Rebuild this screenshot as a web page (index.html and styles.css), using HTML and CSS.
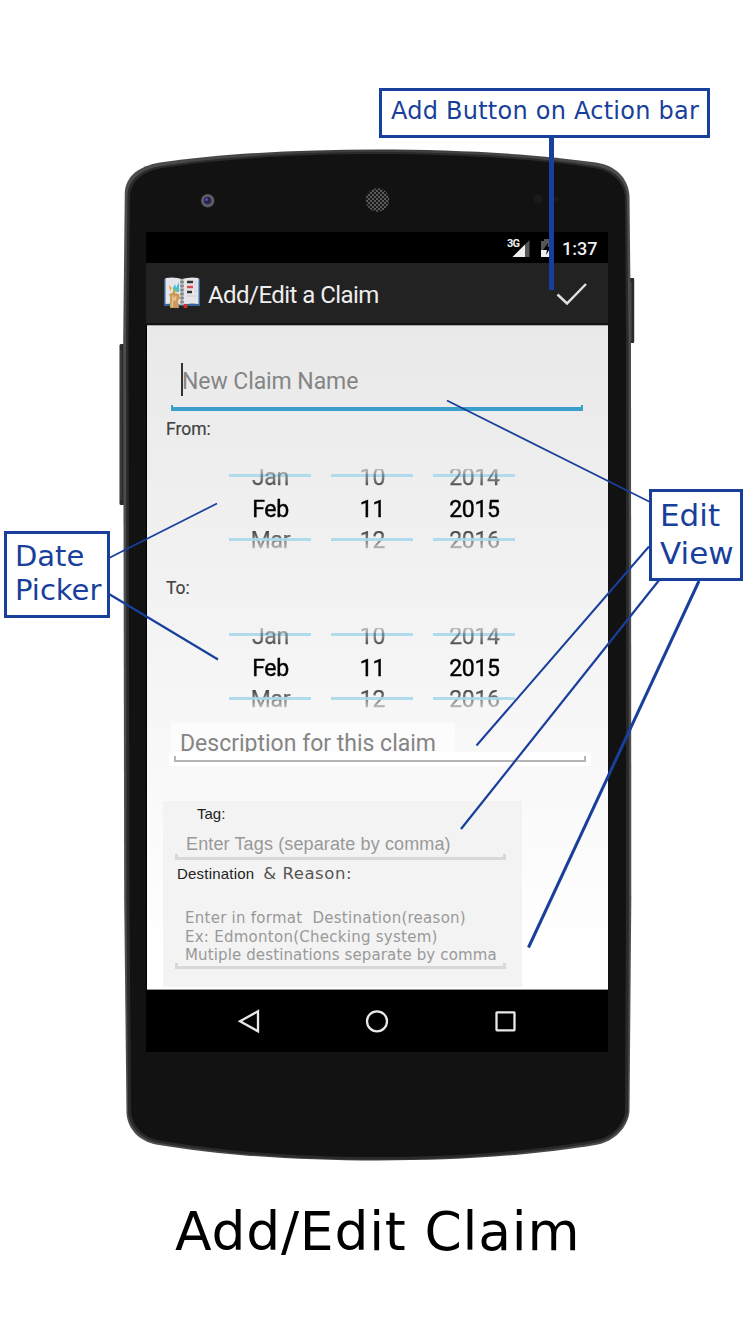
FILE: index.html
```html
<!DOCTYPE html>
<html lang="en">
<head>
<meta charset="utf-8">
<title>Add/Edit Claim</title>
<link rel="stylesheet" href="styles.css">
</head>
<body>
<main class="board">
  <section class="device">
    <svg class="shell" viewBox="0 0 756 1323" aria-hidden="true">
      <defs>
        <linearGradient id="rim" x1="0" x2="1"><stop offset="0" stop-color="#4c4d4f"/><stop offset=".5" stop-color="#3c3c3c"/><stop offset="1" stop-color="#4c4d4f"/></linearGradient>
        <radialGradient id="lens"><stop offset="0" stop-color="#3a3a80"/><stop offset=".5" stop-color="#3c3c58"/><stop offset=".75" stop-color="#66676c"/><stop offset="1" stop-color="#4a4a4c"/></radialGradient>
        <pattern id="mesh" width="4" height="4" patternUnits="userSpaceOnUse"><rect width="4" height="4" fill="#5c5c5c"/><circle cx="1" cy="1" r="1.150" fill="#161616"/><circle cx="3" cy="3" r="1.150" fill="#161616"/></pattern>
      </defs>
      <rect x="119.500" y="344" width="6" height="161" rx="1.500" fill="#2b2b2b"/>
      <rect x="120.500" y="350" width="1" height="150" fill="#4a4a4a"/>
      <rect x="628" y="278" width="6.200" height="65" rx="1" fill="#2a2a2b"/>
      <rect x="630.500" y="282" width="1" height="58" fill="#4a4a4a"/>
      <path fill="url(#rim)" d="M123.200 340 L124.800 192 C126 176 139 166 160 162.500 C222 153.500 300 149.500 377 149.500 C454 149.500 533 153.500 596 162.500 C615 165.500 628 177 629.500 196 L631 340 L631.300 900 L629.500 1111 C628 1128 614 1141 598 1144.500 C538 1155 458 1160.500 377 1160.500 C297 1160.500 217 1155 156 1144.500 C139 1141 127.500 1129 126.500 1113 L124.200 900 Z"/>
      <path fill="#2a2a2b" d="M126 340 L127.500 194 C129 179 141 169.500 161 166 C222 156.500 300 152 377 152 C454 152 533 156.500 595 166 C613 169 626 180 627 197 L628.600 340 L629 900 L628 1111 C626 1126 613 1139 597 1142.500 C538 1153 458 1159.500 377 1159.500 C297 1159.500 217 1153.500 157 1142.500 C141 1139 129 1127 128 1112 L126.500 900 Z"/>
      <path fill="#121212" d="M128.500 340 L130 196 C131 181 143 171.500 162 168 C222 158.500 300 154 377 154 C454 154 533 158.500 594 168 C612 171 624 182 625 198 L626 340 L626 900 L625 1111 C624 1125 611 1137 596 1140 C538 1150.500 458 1157 377 1157 C297 1157 217 1151 158 1140 C143 1137 132 1126 131 1111 L129.500 900 Z"/>
      <circle cx="207.700" cy="200.700" r="6.800" fill="url(#lens)"/>
      <circle cx="207.300" cy="200.200" r="3.300" fill="#20204c"/><circle cx="206.500" cy="199.500" r="1.500" fill="#5555b4"/>
      <circle cx="377.500" cy="200" r="11.700" fill="url(#mesh)"/>
      <circle cx="538" cy="199" r="4.500" fill="#1a1a1b"/><circle cx="556" cy="199" r="2.500" fill="#1a1a1b"/>
    </svg>
    <div class="screen">
      <header class="status">
        <svg class="signal" width="26" height="20" viewBox="0 0 26 20"><path d="M22.500 1v17H5.500z" fill="#555"/><path d="M18 5.500v12.500H5.500z" fill="#eee"/></svg>
        <span class="net">3G</span>
        <svg class="battery" width="13" height="19" viewBox="0 0 13 19"><path d="M0 2h3V0h6v2h3v9H0z" fill="#555"/><path d="M0 11h12v7H0z" fill="#eee"/><path d="M7 4L2 11h4l-1 5 5-8H6.500z" fill="#000"/></svg>
        <time class="clock">1:37</time>
      </header>
      <div class="actionbar">
        <svg class="logo" width="38" height="34" viewBox="0 0 38 34">
          <path d="M1 3h36v27H1z" fill="#35659b"/><path d="M2.500 2q9-1.500 16.500 1 8-2.500 16.500-1v26q-9-1.500-16.500 1-8-2.500-16.500-1z" fill="#e6e6ea"/>
          <path d="M19 3v26" stroke="#aaa" stroke-width="3"/><path d="M17 6h4M17 10h4M17 14h4M17 18h4M17 22h4M17 26h4" stroke="#666"/>
          <path d="M10 12l2-4 1 4 3-6v10h-6z" fill="#42b9dd"/><path d="M6 9l3 3-2 3z" fill="#f0a22b"/><path d="M10 13h4v3h-4z" fill="#8ac16b"/>
          <path d="M7 32V21l-1-3 3-1 2-3 1 3 4 1 1 4-2 3 1 7H8z" fill="#c99a5b"/><path d="M9 31l1-10 2 3 1-4" stroke="#e8c58c" fill="none" stroke-width="1.500"/>
          <path d="M24 6h6M24 16h5" stroke="#333" stroke-width="2.500"/><path d="M24 11h6" stroke="#d94b55" stroke-width="2.500"/><path d="M31 6h3M31 9h3M31 12h3M31 15h3M24 20h10" stroke="#ccc"/><circle cx="22.500" cy="30" r="2.300" fill="#cf3326"/>
        </svg>
        <h1 class="heading">Add/Edit a Claim</h1>
        <svg class="done" width="32" height="26" viewBox="0 0 32 26"><path d="M1.500 13.500l9.500 9L30 3" fill="none" stroke="#e0e0e0" stroke-width="2.500"/></svg>
      </div>
      <form class="form">
        <div class="name"><span class="hint name-hint">New Claim Name</span><i class="rule rule-active"></i></div>
        <label class="label">From:</label>
        <div class="picker">
          <div class="wheel"><div class="values"><span>Jan</span><b>Feb</b><span>Mar</span></div></div>
          <div class="wheel"><div class="values"><span>10</span><b>11</b><span>12</span></div></div>
          <div class="wheel"><div class="values"><span>2014</span><b>2015</b><span>2016</span></div></div>
        </div>
        <label class="label label-to">To:</label>
        <div class="picker">
          <div class="wheel"><div class="values"><span>Jan</span><b>Feb</b><span>Mar</span></div></div>
          <div class="wheel"><div class="values"><span>10</span><b>11</b><span>12</span></div></div>
          <div class="wheel"><div class="values"><span>2014</span><b>2015</b><span>2016</span></div></div>
        </div>
        <div class="desc"><span class="hint">Description for this claim</span></div>
        <div class="desc-line"><i class="rule rule-thin"></i></div>
        <div class="panel">
          <div class="tag">Tag:</div>
          <div class="tag-hint">Enter Tags (separate by comma)</div>
          <i class="rule rule-pale"></i>
          <div class="dest"><span class="dest-a">Destination</span><span class="dest-b">&amp; Reason:</span></div>
          <div class="dest-hint"><p>Enter in format&nbsp; Destination(reason)</p><p>Ex: Edmonton(Checking system)</p><p class="tight">Mutiple destinations separate by comma</p></div>
          <i class="rule rule-pale"></i>
        </div>
      </form>
      <nav class="nav">
        <svg width="24" height="26" viewBox="0 0 24 26"><path d="M3 13.300L21 3.300v20z"/></svg>
        <svg width="24" height="26" viewBox="0 0 24 26"><circle cx="12" cy="13.300" r="10"/></svg>
        <svg width="24" height="26" viewBox="0 0 24 26"><rect x="3.500" y="4.300" width="18" height="18" rx=".5"/></svg>
      </nav>
    </div>
  </section>
  <h2 class="title">Add/Edit Claim</h2>

  <svg class="leaders" viewBox="0 0 756 1323" aria-hidden="true">
    <path d="M551.500 137V290" stroke-width="5"/>
    <path d="M447 400.500L650 502" stroke-width="1.700"/>
    <path d="M649 546.500L476.500 745.500" stroke-width="2"/>
    <path d="M660 579L461 829" stroke-width="2.200"/>
    <path d="M699 581L528.500 947.500" stroke-width="3"/>
    <path d="M109 558L217 503.500" stroke-width="1.700"/>
    <path d="M109 594L218 659.500" stroke-width="2.200"/>
  </svg>
  <aside class="callout callout-add">Add Button on Action bar</aside>
  <aside class="callout callout-edit">Edit<br>View</aside>
  <aside class="callout callout-date">Date<br>Picker</aside>
</main>
</body>
</html>
```

FILE: styles.css
```css
* { box-sizing: border-box; }
body { margin: 0; background: #fff; }
p, h1, h2 { margin: 0; font-weight: 400; }

.board { position: relative; width: 756px; height: 1323px; overflow: hidden; font-family: Roboto, sans-serif; }
.shell, .leaders { position: absolute; left: 0; top: 0; width: 756px; height: 1323px; }
.leaders { fill: none; stroke: #183f9b; }
.device { padding: 232px 148px 0 146px; }
.screen { position: relative; display: flex; flex-direction: column; width: 462px; height: 820px; background: #000; }

.status { position: relative; display: flex; align-items: center; justify-content: flex-end; height: 31px; padding-right: 10px; color: #eee; }
.net { position: absolute; left: 361px; top: 5px; font-size: 11px; line-height: 13px; font-weight: 700; letter-spacing: -.8px; }
.signal { margin: 2px 8px 0 0; }
.battery { margin: 1px 8px 0 0; }
.clock { width: 36px; padding-top: 2px; font-size: 18px; line-height: 31px; font-weight: 500; white-space: nowrap; }

.actionbar { display: flex; align-items: center; height: 62px; padding: 0 20px 0 17px; background: #222; border-bottom: 2px solid #131313; }
.heading { flex: 1; margin-left: 7px; padding-top: 3px; color: #eee; font-size: 24px; line-height: 30px; white-space: nowrap; letter-spacing: -.55px; }
.done { margin-top: 1px; }

.form { display: flex; flex-direction: column; height: 665px; margin-left: 1px; background: linear-gradient(#e9e9e9, #f0f0f0 30%, #f8f8f8 65%, #fff 95%); border-top: 1px solid #aaa; border-bottom: 1px solid #999; }
.hint { color: #858585; font-size: 23px; white-space: nowrap; }
.name { display: flex; flex-direction: column; justify-content: space-between; margin: 37px 25px 0 24px; height: 48px; }
.name-hint { align-self: flex-start; margin-left: 10px; height: 33px; line-height: 37px; border-left: 2px solid #333; text-indent: -1px; letter-spacing: -.08px; }
.rule { display: block; height: 6px; border: 2px solid; border-top: 0; }
.rule-active { border-color: #3a9fcb; border-bottom-width: 4px; }
.rule-thin { border-color: #b5b5b5; }
.rule-pale { border: 3px solid #d8d8d8; border-top: 0; margin: 0 16px 0 12px; }

.label { margin: 8px 0 0 19px; height: 20px; font-size: 17.500px; line-height: 20px; color: #444; -webkit-text-stroke: .2px #444; }
.label-to { margin-top: 29px; }
.picker { display: flex; gap: 19px; margin: 30px 0 0 82px; height: 80px; }
.wheel { position: relative; width: 83px; }
.wheel::before, .wheel::after { content: ""; position: absolute; left: 0; right: 1px; height: 3px; background: #a9d8ec; opacity: .9; }
.wheel::before { top: 5px; }
.wheel::after { top: 69px; }
.values { display: flex; flex-direction: column; align-items: center; justify-content: center; height: 80px; padding-top: 1px; overflow: hidden; font-size: 23px; letter-spacing: -.3px; color: #000;
  -webkit-mask-image: linear-gradient(rgba(0,0,0,.3), #000 24%, #000 76%, rgba(0,0,0,.3)); mask-image: linear-gradient(rgba(0,0,0,.3), #000 24%, #000 76%, rgba(0,0,0,.3)); }
.values span, .values b { flex: none; height: 31.500px; line-height: 32px; }
.values span { color: #3c3c3c; -webkit-text-stroke: .25px #3c3c3c; }
.values b { font-weight: 400; -webkit-text-stroke: .4px #000; }

.desc { margin: 15px 0 0 24px; width: 284px; height: 29px; padding-left: 9px; overflow: hidden; background: #fcfcfc; line-height: 41px; }
.desc-line { margin: 0 17px 0 22px; height: 14px; padding: 4px 5px 0; background: #fff; }
.panel { display: flex; flex-direction: column; margin: 35px 0 0 16px; width: 359px; height: 186px; background: #f3f3f3; white-space: nowrap; }
.tag { margin: 3px 0 0 34px; height: 20px; font: 15px/19px "Liberation Sans", sans-serif; color: #222; }
.tag-hint { margin: 9px 0 0 23px; height: 21px; font: 18px/23px "Liberation Sans", sans-serif; letter-spacing: .13px; color: #999; }
.dest { display: flex; align-items: center; gap: 9px; height: 28px; margin-bottom: -2px; padding-left: 14px; }
.dest-a { font: 15px/20px "Liberation Sans", sans-serif; letter-spacing: .2px; color: #222; }
.dest-b { font: 16.500px/20px "DejaVu Sans", sans-serif; letter-spacing: .55px; color: #555; }
.dest-hint { margin: 23px 0 0 22px; height: 54px; font: 15px/18.500px "DejaVu Sans", sans-serif; letter-spacing: .26px; color: #999; }
.dest-hint .tight { letter-spacing: .13px; }

.nav { display: flex; align-items: center; justify-content: space-between; height: 62px; padding: 0 91px; }
.nav svg { fill: none; stroke: #e8e8e8; stroke-width: 2.300; }

.title { margin: 147px 0 0 175px; font: 53.500px/66px "DejaVu Sans", sans-serif; letter-spacing: .8px; color: #000; white-space: nowrap; }

.callout { position: absolute; border: 3px solid #183f9b; background: #fff; color: #183f9b; font-family: "DejaVu Sans", sans-serif; white-space: nowrap; }
.callout-add { left: 379px; top: 88px; width: 331px; height: 50px; padding-left: 9px; font-size: 24px; line-height: 40px; letter-spacing: .24px; }
.callout-edit { left: 649px; top: 489px; width: 94px; height: 92px; padding: 4px 0 0 8px; font-size: 31px; line-height: 38px; }
.callout-date { left: 4px; top: 531px; width: 106px; height: 87px; padding: 5px 0 0 8px; font-size: 29px; line-height: 34px; }
```
